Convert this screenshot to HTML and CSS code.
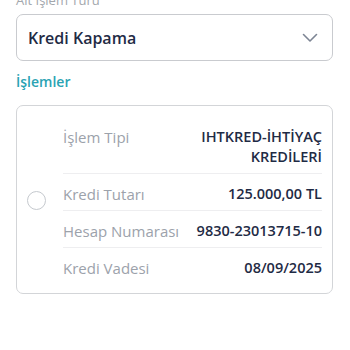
FILE: index.html
```html
<!DOCTYPE html>
<html lang="tr">
<head>
<meta charset="utf-8">
<link rel="stylesheet" href="styles.css">
</head>
<body>
<div class="page">
  <div class="field-label">Alt İşlem Türü</div>
  <div class="select">
    <span class="select-text">Kredi Kapama</span>
    <svg class="chevron" width="16" height="10" viewBox="0 0 16 10"><path d="M1.5 1.5 L8 8 L14.5 1.5" fill="none" stroke="#7d8594" stroke-width="1.6" stroke-linecap="round" stroke-linejoin="round"/></svg>
  </div>
  <div class="section-title">İşlemler</div>
  <div class="card">
    <div class="radio-col"><span class="radio"></span></div>
    <div class="rows">
      <div class="row">
        <span class="label">İşlem Tipi</span>
        <span class="value">IHTKRED-İHTİYAÇ KREDİLERİ</span>
      </div>
      <div class="row">
        <span class="label">Kredi Tutarı</span>
        <span class="value">125.000,00 TL</span>
      </div>
      <div class="row">
        <span class="label">Hesap Numarası</span>
        <span class="value">9830-23013715-10</span>
      </div>
      <div class="row">
        <span class="label">Kredi Vadesi</span>
        <span class="value">08/09/2025</span>
      </div>
    </div>
  </div>
</div>
</body>
</html>
```
FILE: styles.css
```css
html, body {
  margin: 0;
  padding: 0;
  background: #ffffff;
  overflow: hidden;
}
body {
  font-family: "Open Sans", "Noto Sans", sans-serif;
}
.page {
  padding: 0 17px 0 16px;
}
.field-label {
  font-size: 13px;
  line-height: 16px;
  color: #a3a7ad;
  margin-top: -8px;
}
.select {
  margin-top: 6px;
  height: 47px;
  box-sizing: border-box;
  border: 1.5px solid #c9cbcf;
  border-radius: 7px;
  display: flex;
  align-items: center;
  justify-content: space-between;
  padding: 0 14px 0 11px;
}
.select-text {
  font-size: 16px;
  font-weight: 600;
  color: #1f2b45;
}
.chevron {
  display: block;
  margin-top: 1px;
}
.section-title {
  margin-top: 11px;
  font-size: 14px;
  line-height: 20px;
  font-weight: 600;
  color: #2aa3b3;
}
.card {
  margin-top: 13px;
  border: 1px solid #d3d5d8;
  border-radius: 7px;
  display: flex;
  align-items: center;
  padding: 11px 10px 9px 0;
}
.radio-col {
  width: 46px;
  display: flex;
  align-items: center;
  padding-left: 10px;
  box-sizing: border-box;
}
.radio {
  display: block;
  width: 19px;
  height: 19px;
  box-sizing: border-box;
  border: 1px solid #c5c9ce;
  border-radius: 50%;
}
.rows {
  flex: 1;
}
.row {
  display: flex;
  justify-content: space-between;
  align-items: flex-start;
  padding: 10px 0 6px;
  border-bottom: 1px solid #eeeef0;
  font-size: 15px;
  line-height: 20px;
}
.row:last-child {
  border-bottom: none;
}
.label {
  color: #9ca2ab;
  white-space: nowrap;
}
.value {
  color: #1f2b45;
  font-weight: 600;
  font-size: 14.5px;
  text-align: right;
  max-width: 160px;
}
```
